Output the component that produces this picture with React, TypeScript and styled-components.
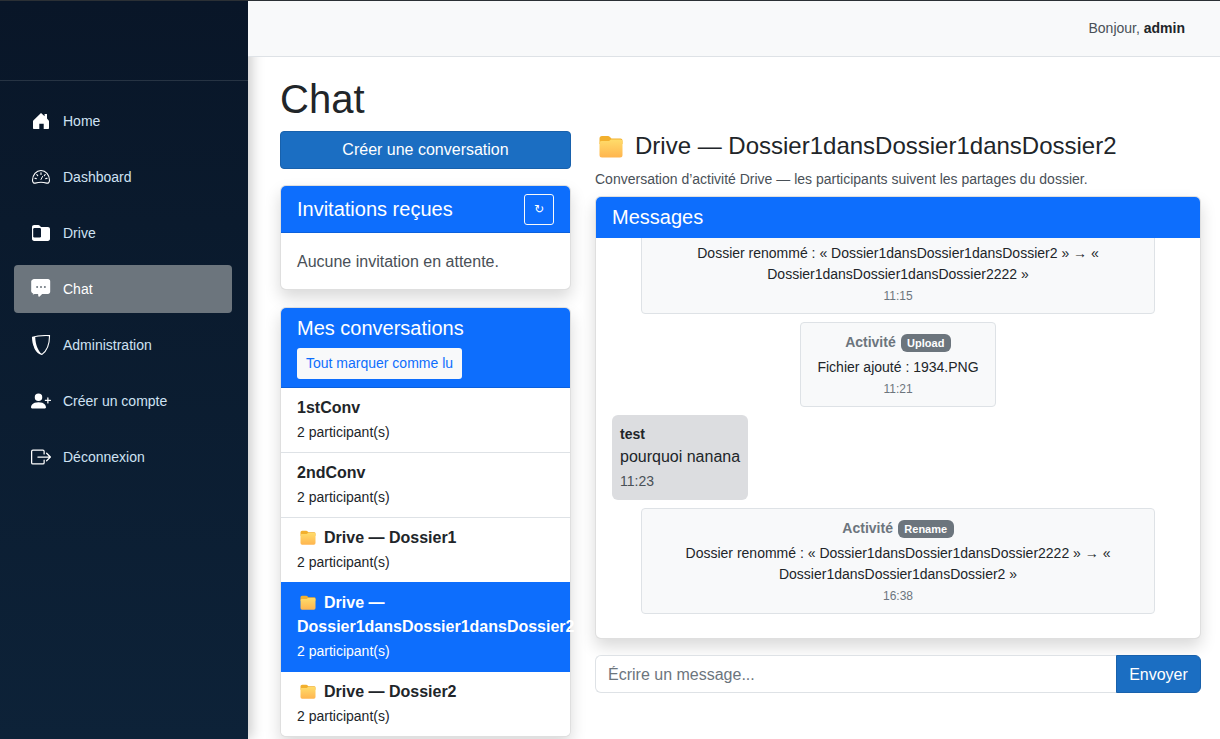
import styled, { createGlobalStyle } from "styled-components";
import { BsBoxArrowRight, BsPersonPlusFill } from "react-icons/bs";

const GlobalStyle = createGlobalStyle`
  html, body { margin: 0; height: 100%; overflow: hidden; background: #fff; }
  body { font-family: "Liberation Sans", Arial, sans-serif; font-size: 16px; line-height: 1.5; color: #212529; }
  * { box-sizing: border-box; }
`;

const HomeIcon = () => (
  <svg width="20" height="20" viewBox="0 0 20 20" fill="#fff">
    <path d="M10 2 13.600 5.200V3H16v4.400l1.700 2.100c.2.300.3.600.3 1V17c0 .6-.4 1-1 1h-4.300v-5.200H8.300V18H3c-.6 0-1-.4-1-1v-6.500c0-.4.100-.7.300-1Z" />
  </svg>
);

const GaugeIcon = () => (
  <svg width="20" height="20" viewBox="0 0 20 20" fill="none" stroke="#fff" strokeLinecap="round">
    <path
      d="M1.500 13.200C1.500 7.700 5.300 3.500 10 3.500s8.500 4.200 8.500 9.700c0 1.900-1.200 3.300-2.800 2.900-1.800-.5-3.500-.9-5.700-.9s-3.900.4-5.700.9c-1.600.4-2.800-1-2.800-2.900Z"
      strokeWidth="1.100"
    />
    <path d="M10 5.800v1.600M5.800 7.500l.9 1.200M14.200 7.500l-.9 1.200M3.900 11.200l1.400.4M16.100 11.200l-1.400.4" strokeWidth="1.100" />
    <path d="M10 12.500l1.500-3" strokeWidth="1" />
  </svg>
);

const DriveIcon = () => (
  <svg width="20" height="20" viewBox="0 0 20 20">
    <path
      d="M1 4.200C1 2.900 1.900 2 3.200 2h4c.7 0 1.200.3 1.600.8L10 4h6.800C18.100 4 19 4.900 19 6.200v9.600c0 1.300-.9 2.200-2.200 2.200H3.200C1.900 18 1 17.100 1 15.800Z"
      fill="#fff"
    />
    <rect x="2.200" y="5" width="7.800" height="9.500" rx="1.200" fill="#0a1a2e" />
  </svg>
);

const ChatIcon = () => (
  <svg width="20" height="20" viewBox="0 0 20 20">
    <path
      d="M3 0h14c1.200 0 2.200 1 2.200 2.200v10.600c0 1.200-1 2.200-2.200 2.200h-5.800l-2.600 2.400c-.6.500-1.200.2-1.300-.5l-.2-1.900H3.500c-.4.300-1.100.5-1.800.4l.6-1c-1.200-.2-1.900-.9-1.900-1.900l-.6-.4.400-.7V2.200C.8 1 1.800 0 3 0Z"
      fill="#fff"
    />
    <circle cx="6.100" cy="8" r="1" fill="#6c757d" />
    <circle cx="10" cy="8" r="1" fill="#6c757d" />
    <circle cx="13.900" cy="8" r="1" fill="#6c757d" />
  </svg>
);

const ShieldIcon = () => (
  <svg width="20" height="20" viewBox="0 0 20 20" fill="none">
    <path d="M1.500 2.300C7 .4 13 .4 18.500.6 18.600 8.500 16 15.500 11 19.400 5 18.400 1.600 10.500 1.500 2.300Z" stroke="#fff" strokeWidth="1.100" />
    <path d="M1.500 2.300C1.600 10.500 5 18.400 11 19.400 7 15.500 4.500 10 4.200 1.700Z" fill="#fff" />
  </svg>
);

const FolderEmoji = ({ $large }: { $large?: boolean }) => (
  <FolderSvg viewBox="0 0 24 23" $large={$large}>
    <defs>
      <linearGradient id="folderFront" x1="0" y1="0" x2="0" y2="1">
        <stop offset="0" stopColor="#ffdc6a" />
        <stop offset="1" stopColor="#ffb54f" />
      </linearGradient>
    </defs>
    <path d="M.5 3.500Q.5 1 3 1h6q1 0 1.700.7L12.500 3.500H21.500q2 0 2 2V9H.5Z" fill="#f2b02e" />
    <path
      d="M.5 8Q.5 6 2.500 6H10l2-1.500h9.500q2 0 2 2V20q0 2.500-2.500 2.500H3Q.5 22.500.5 20Z"
      fill="url(#folderFront)"
    />
  </FolderSvg>
);

const navItems = [
  { label: "Home", icon: <HomeIcon /> },
  { label: "Dashboard", icon: <GaugeIcon /> },
  { label: "Drive", icon: <DriveIcon /> },
  { label: "Chat", icon: <ChatIcon />, active: true },
  { label: "Administration", icon: <ShieldIcon /> },
  { label: "Créer un compte", icon: <BsPersonPlusFill size={20} /> },
  { label: "Déconnexion", icon: <BsBoxArrowRight size={20} /> },
];

const conversations = [
  { name: "1stConv" },
  { name: "2ndConv" },
  { name: "Drive — Dossier1", drive: true },
  { name: "Drive — Dossier1dansDossier1dansDossier2", drive: true, active: true },
  { name: "Drive — Dossier2", drive: true },
];

export default function App() {
  return (
    <Page>
      <GlobalStyle />
      <Sidebar>
        <Brand />
        <Nav>
          {navItems.map((item) => (
            <NavItem key={item.label} $active={item.active}>
              <NavIcon>{item.icon}</NavIcon>
              {item.label}
            </NavItem>
          ))}
        </Nav>
      </Sidebar>
      <Main>
        <TopBar>
          <span>
            Bonjour, <strong>admin</strong>
          </span>
        </TopBar>
        <Content>
          <Title>Chat</Title>
          <Columns>
            <LeftColumn>
              <PrimaryButton>Créer une conversation</PrimaryButton>
              <Card>
                <InviteHeader>
                  <CardTitle>Invitations reçues</CardTitle>
                  <RefreshButton>↻</RefreshButton>
                </InviteHeader>
                <EmptyText>Aucune invitation en attente.</EmptyText>
              </Card>
              <Card>
                <ConversationsHeader>
                  <CardTitle>Mes conversations</CardTitle>
                  <MarkButton>Tout marquer comme lu</MarkButton>
                </ConversationsHeader>
                {conversations.map((c, i) => (
                  <ConversationRow
                    key={c.name}
                    $active={c.active}
                    $first={i === 0}
                    $afterActive={conversations[i - 1]?.active}
                  >
                    <ConversationName>
                      {c.drive && <FolderEmoji />}
                      {c.name}
                    </ConversationName>
                    <small>2 participant(s)</small>
                  </ConversationRow>
                ))}
              </Card>
            </LeftColumn>
            <RightColumn>
              <ChatTitle>
                <FolderEmoji $large />
                Drive — Dossier1dansDossier1dansDossier2
              </ChatTitle>
              <Subtitle>Conversation d’activité Drive — les participants suivent les partages du dossier.</Subtitle>
              <MessagesCard>
                <MessagesHeader>Messages</MessagesHeader>
                <MessagesBody>
                  <ClippedStart>
                    <Activity>
                      <ActivityTitle>
                        Activité <Badge>Rename</Badge>
                      </ActivityTitle>
                      <ActivityText>
                        Dossier renommé : « Dossier1dansDossier1dansDossier2 » → « Dossier1dansDossier1dansDossier2222 »
                      </ActivityText>
                      <ActivityTime>11:15</ActivityTime>
                    </Activity>
                  </ClippedStart>
                  <Activity>
                    <ActivityTitle>
                      Activité <Badge>Upload</Badge>
                    </ActivityTitle>
                    <ActivityText>Fichier ajouté : 1934.PNG</ActivityText>
                    <ActivityTime>11:21</ActivityTime>
                  </Activity>
                  <Bubble>
                    <BubbleAuthor>test</BubbleAuthor>
                    <BubbleText>pourquoi nanana</BubbleText>
                    <BubbleTime>11:23</BubbleTime>
                  </Bubble>
                  <Activity>
                    <ActivityTitle>
                      Activité <Badge>Rename</Badge>
                    </ActivityTitle>
                    <ActivityText>
                      Dossier renommé : « Dossier1dansDossier1dansDossier2222 » → « Dossier1dansDossier1dansDossier2 »
                    </ActivityText>
                    <ActivityTime>16:38</ActivityTime>
                  </Activity>
                </MessagesBody>
              </MessagesCard>
              <InputGroup>
                <MessageInput placeholder="Écrire un message..." />
                <SendButton>Envoyer</SendButton>
              </InputGroup>
            </RightColumn>
          </Columns>
        </Content>
      </Main>
    </Page>
  );
}

const Page = styled.div`
  display: flex;
  width: 1220px;
  height: 739px;
  overflow: hidden;
  border-top: 1px solid #2b3035;
`;

const Sidebar = styled.aside`
  width: 248px;
  flex-shrink: 0;
  background: linear-gradient(180deg, #091628 0%, #0a1a2d 30%, #0d2238 100%);
  position: relative;
  z-index: 1;
  box-shadow: 4px 0 12px rgba(0, 0, 0, 0.2);
`;

const Brand = styled.div`
  height: 80px;
  border-bottom: 1px solid rgba(255, 255, 255, 0.12);
`;

const Nav = styled.nav`
  display: flex;
  flex-direction: column;
  gap: 8px;
  padding: 16px 16px 0 14px;
`;

const NavItem = styled.a<{ $active?: boolean }>`
  display: flex;
  align-items: center;
  gap: 12px;
  height: 48px;
  padding-left: 17px;
  font-size: 14px;
  border-radius: 4px;
  color: ${(p) => (p.$active ? "#fff" : "#cfe2f3")};
  background: ${(p) => (p.$active ? "#6c757d" : "transparent")};
`;

const NavIcon = styled.span`
  display: flex;
  width: 20px;
  justify-content: center;
  color: #fff;
`;

const Main = styled.main`
  flex: 1;
  min-width: 0;
  display: flex;
  flex-direction: column;
`;

const TopBar = styled.header`
  position: relative;
  z-index: 2;
  height: 56px;
  flex-shrink: 0;
  display: flex;
  align-items: center;
  justify-content: flex-end;
  padding-right: 35px;
  font-size: 14px;
  color: #495057;
  background: #f8f9fa;
  border-bottom: 1px solid #dee2e6;

  strong {
    color: #212529;
  }
`;

const Content = styled.div`
  padding: 18px 19px 0 32px;
`;

const Title = styled.h1`
  margin: 0 0 8px;
  font-size: 40px;
  font-weight: 400;
  line-height: 1.2;
`;

const Columns = styled.div`
  display: flex;
  gap: 24px;
`;

const LeftColumn = styled.div`
  width: 291px;
  flex-shrink: 0;
  display: flex;
  flex-direction: column;
`;

const RightColumn = styled.div`
  flex: 1;
  min-width: 0;
`;

const PrimaryButton = styled.button`
  height: 38px;
  margin-bottom: 16px;
  font: inherit;
  color: #fff;
  background: #1b6ec2;
  border: 1px solid #1861ac;
  border-radius: 4px;
`;

const Card = styled.section`
  margin-bottom: 17px;
  background: #fff;
  border: 1px solid rgba(0, 0, 0, 0.125);
  border-radius: 6px;
  box-shadow: 0 8px 16px rgba(0, 0, 0, 0.15);
`;

const CardTitle = styled.h5`
  margin: 0;
  font-size: 20px;
  font-weight: 400;
  line-height: 1.2;
  color: #fff;
`;

const InviteHeader = styled.div`
  display: flex;
  align-items: center;
  justify-content: space-between;
  height: 47px;
  padding: 0 16px;
  background: #0d6efd;
  border-bottom: 1px solid rgba(0, 0, 0, 0.125);
  border-radius: 5px 5px 0 0;
`;

const RefreshButton = styled.button`
  width: 30px;
  height: 31px;
  padding: 0;
  font-family: "DejaVu Sans", sans-serif;
  font-size: 12px;
  color: #fff;
  background: transparent;
  border: 1px solid #f8f9fa;
  border-radius: 3px;
`;

const EmptyText = styled.p`
  margin: 0;
  padding: 17px 16px 0;
  height: 56px;
  color: #495057;
`;

const ConversationsHeader = styled.div`
  height: 80px;
  padding: 8px 16px;
  background: #0d6efd;
  border-bottom: 1px solid rgba(0, 0, 0, 0.125);
  border-radius: 5px 5px 0 0;
`;

const MarkButton = styled.button`
  display: block;
  height: 31px;
  margin-top: 8px;
  padding: 0 9px;
  font: inherit;
  font-size: 14px;
  color: #0d6efd;
  background: #f8f9fa;
  border: 0;
  border-radius: 3px;
`;

const ConversationRow = styled.div<{ $active?: boolean; $first?: boolean; $afterActive?: boolean }>`
  padding: 8px 16px 9px;
  color: ${(p) => (p.$active ? "#fff" : "#212529")};
  background: ${(p) => (p.$active ? "#0d6efd" : "#fff")};
  border-top: ${(p) => (p.$first ? "0" : `1px solid ${p.$active || p.$afterActive ? "#0d6efd" : "#dee2e6"}`)};

  &:last-child {
    border-radius: 0 0 5px 5px;
  }

  small {
    display: block;
    margin-top: 2px;
    font-size: 14px;
    line-height: 21px;
  }
`;

const ConversationName = styled.div`
  font-weight: 700;
`;

const FolderSvg = styled.svg<{ $large?: boolean }>`
  display: inline-block;
  width: ${(p) => (p.$large ? "24px" : "16px")};
  height: ${(p) => (p.$large ? "23px" : "15px")};
  margin: ${(p) => (p.$large ? "0 12px 0 4px" : "0 8px 0 3px")};
  vertical-align: ${(p) => (p.$large ? "-4px" : "-2px")};
`;

const ChatTitle = styled.h4`
  margin: 0 0 8px;
  padding-top: 1px;
  font-size: 24px;
  font-weight: 400;
  line-height: 1.2;
`;

const Subtitle = styled.p`
  margin: 0 0 6px;
  font-size: 14px;
  color: #495057;
`;

const MessagesCard = styled.section`
  display: flex;
  flex-direction: column;
  height: 443px;
  background: #fff;
  border: 1px solid rgba(0, 0, 0, 0.125);
  border-radius: 6px;
  overflow: hidden;
  box-shadow: 0 8px 16px rgba(0, 0, 0, 0.15);
`;

const MessagesHeader = styled.div`
  height: 41px;
  flex-shrink: 0;
  padding: 8px 16px;
  font-size: 20px;
  line-height: 24px;
  color: #fff;
  background: #0d6efd;
`;

const MessagesBody = styled.div`
  flex: 1;
  min-height: 0;
  display: flex;
  flex-direction: column;
  gap: 8px;
  padding: 0 16px;
  overflow: hidden;
`;

const ClippedStart = styled.div`
  height: 76px;
  flex-shrink: 0;
  display: flex;
  flex-direction: column;
  justify-content: flex-end;
  align-items: center;
`;

const Activity = styled.div`
  flex-shrink: 0;
  align-self: center;
  max-width: 514px;
  padding: 9px 16px 8px;
  text-align: center;
  background: #f8f9fa;
  border: 1px solid #dee2e6;
  border-radius: 4px;
`;

const ActivityTitle = styled.div`
  margin-bottom: 4px;
  font-size: 14px;
  font-weight: 700;
  line-height: 21px;
  color: #6c757d;
`;

const Badge = styled.span`
  display: inline-block;
  margin-left: 1px;
  padding: 3px 6.5px;
  font-size: 11px;
  line-height: 12px;
  font-weight: 700;
  color: #fff;
  background: #6c757d;
  border-radius: 6px;
`;

const ActivityText = styled.div`
  font-size: 14px;
  line-height: 21px;
`;

const ActivityTime = styled.div`
  margin-top: 2px;
  font-size: 12px;
  line-height: 18px;
  color: #6c757d;
`;

const Bubble = styled.div`
  flex-shrink: 0;
  align-self: flex-start;
  padding: 9px 8px 8px;
  background: #dcdde0;
  border-radius: 6px;
`;

const BubbleAuthor = styled.div`
  font-size: 14px;
  font-weight: 700;
  line-height: 21px;
`;

const BubbleText = styled.div`
  line-height: 24px;
`;

const BubbleTime = styled.div`
  margin-top: 2px;
  font-size: 14px;
  line-height: 21px;
  color: #495057;
`;

const InputGroup = styled.div`
  display: flex;
  height: 38px;
  margin-top: 16px;
`;

const MessageInput = styled.input`
  flex: 1;
  min-width: 0;
  padding: 7px 12px 5px;
  font: inherit;
  border: 1px solid #dee2e6;
  border-right: 0;
  border-radius: 6px 0 0 6px;
  outline: 0;

  &::placeholder {
    color: #6c757d;
  }
`;

const SendButton = styled.button`
  width: 85px;
  padding: 2px 0 0;
  font: inherit;
  color: #fff;
  background: #1b6ec2;
  border: 1px solid #1861ac;
  border-radius: 0 6px 6px 0;
`;
